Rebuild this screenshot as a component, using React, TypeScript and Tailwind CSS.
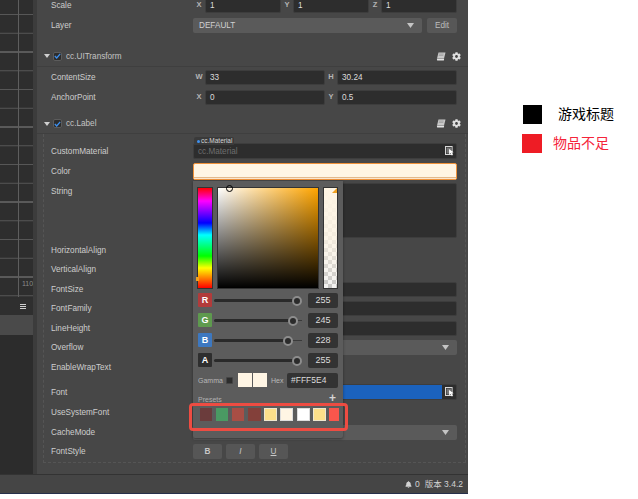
import React from "react";
import { FaCog, FaBell } from "react-icons/fa";

const BookIcon = () => (
  <svg width="10" height="9" viewBox="0 0 10 9" className="shrink-0">
    <path d="M2.5 0.5h7l-1.5 6h-7z" fill="#c9c9c9" />
    <path d="M0.8 6.8h7.4l-0.4 1.7h-6.6z" fill="#e4e4e4" />
    <path d="M3 2h4.6M2.7 3.4h4.6" stroke="#8a8a8a" strokeWidth="0.6" />
  </svg>
);

const PickIcon = () => (
  <svg width="9" height="10" viewBox="0 0 9 10" className="shrink-0">
    <rect x="0.5" y="0.5" width="6.6" height="8" fill="none" stroke="#d8d8d8" strokeWidth="1" />
    <rect x="1.5" y="1.5" width="4.6" height="6" fill="#777" />
    <path d="M4 3l4.6 3.2-2 .4 1.2 2.4-1 .5-1.2-2.4-1.4 1.3z" fill="#fff" />
  </svg>
);

const Caret = () => (
  <svg width="7" height="5" viewBox="0 0 7 5" className="shrink-0">
    <path d="M0 0h7L3.5 5z" fill="#c4c4c4" />
  </svg>
);

const Check = () => (
  <span className="flex h-[9px] w-[9px] items-center justify-center rounded-[2px] border border-[#5c5c5c] bg-[#2c2c2c]">
    <svg width="7" height="6" viewBox="0 0 7 6">
      <path d="M0.8 3l1.9 2L6.2 0.8" fill="none" stroke="#3e90ef" strokeWidth="1.3" />
    </svg>
  </span>
);

const Row = ({ label, h = 20, top = false, children }: { label: string; h?: number; top?: boolean; children?: React.ReactNode }) => (
  <div className="flex shrink-0 items-center" style={{ height: h }}>
    <span className={`w-[156px] shrink-0 pl-[14px] pt-[2px] text-[#cdcdcd] ${top ? "mb-[39px]" : ""}`}>{label}</span>
    <div className="flex w-[264px] items-center">{children}</div>
  </div>
);

const Input = ({ children, className = "" }: { children?: React.ReactNode; className?: string }) => (
  <div className={`flex h-[15px] min-w-0 flex-1 items-center rounded-[2px] border border-[#3d3d3d] bg-[#2d2d2d] px-[4px] ${className}`}>
    {children}
  </div>
);

const Axis = ({ a, v }: { a: string; v: string }) => (
  <div className="flex min-w-0 flex-1 items-center">
    <span className="w-[12px] shrink-0 text-center text-[7.5px] font-bold text-[#b4b4b4]">{a}</span>
    <Input><span className="pt-[2px] text-[#dcdcdc]">{v}</span></Input>
  </div>
);

const Select = ({ children }: { children?: React.ReactNode }) => (
  <div className="flex h-[15px] min-w-0 flex-1 items-center justify-between rounded-[2px] bg-[#5a5a5a] pl-[6px] pr-[8px] text-[#d0d0d0]">
    <span className="pt-[2px]">{children}</span>
    <Caret />
  </div>
);

const Header = ({ name, h }: { name: string; h: string }) => (
  <div className={`flex ${h} shrink-0 items-center border-b border-[#3f3f3f] pl-[7px] pr-[7px]`}>
    <span className="mr-[3px] flex w-[6px] justify-center">
      <svg width="6" height="4" viewBox="0 0 6 4"><path d="M0 0h6L3 4z" fill="#d0d0d0" /></svg>
    </span>
    <Check />
    <span className="ml-[4px] flex-1 pt-[2px] text-[#c4c4c4]">{name}</span>
    <span className="mr-[6px]"><BookIcon /></span>
    <FaCog className="text-[9px] text-[#e0e0e0]" />
  </div>
);

const Channel = ({ tag, bg, x, v }: { tag: string; bg: string; x: number; v: string }) => (
  <div className="flex h-[20px] items-center">
    <span className={`flex h-[14px] w-[14px] items-center justify-center rounded-[1px] text-[9px] font-bold text-white ${bg}`}>{tag}</span>
    <div className="relative mx-[2px] h-[3px] w-[88px]">
      <div className="absolute inset-x-0 top-[1px] h-[1px] bg-[#3a3a3a]" />
      <div className="absolute top-0 h-[3px] rounded-full bg-[#2a2a2a]" style={{ left: 0, width: x }} />
      <div
        className="absolute top-[-3px] h-[10px] w-[10px] rounded-full border-2 border-[#8d8d8d] bg-[#2b2b2b]"
        style={{ left: x - 5 }}
      />
    </div>
    <span className="ml-auto flex h-[15px] w-[30px] items-center justify-center rounded-[2px] bg-[#333] text-[9px] text-[#dcdcdc]">{v}</span>
  </div>
);

const presets = [
  { c: "bg-[#6b3c3c]", w: "w-[12px]" },
  { c: "bg-[#4a9a63]", w: "w-[12px]" },
  { c: "bg-[#a84e45]", w: "w-[12px]" },
  { c: "bg-[#83403a]", w: "w-[13px]" },
  { c: "bg-[#fde08a] border border-[#efe7cf]", w: "w-[13px]" },
  { c: "bg-[#fff5e4] border border-[#ddd]", w: "w-[13px]" },
  { c: "bg-white border border-[#ddd]", w: "w-[13px]" },
  { c: "bg-[#fde08a] border border-[#efe7cf]", w: "w-[13px]" },
  { c: "bg-[#f9564c]", w: "w-[10px]" },
];

const Picker = () => (
  <div className="absolute left-[193px] top-[181px] z-10 flex h-[257px] w-[150px] flex-col rounded-b-[2px] bg-[#5c5c5c] px-[4px] pt-[6px] shadow-[0_1px_3px_rgba(0,0,0,0.4)]">
    <div className="flex h-[102px] gap-[4px]">
      <div className="relative w-[16px] border border-[#333] bg-[linear-gradient(to_bottom,#f00,#f0f_13%,#00f_35%,#0ff_47%,#0f0_68%,#ff0_80%,#f00)]">
        <span className="absolute left-[-2px] top-[89px] h-[4px] w-[3px] bg-[#f0a020]" />
      </div>
      <div className="relative w-[102px] border border-[#333] bg-[linear-gradient(to_bottom,transparent,#000),linear-gradient(to_right,#fff,#ffa500)]">
        <span className="absolute left-[8px] top-[-3px] h-[7px] w-[7px] rounded-full border border-black" />
      </div>
      <div className="relative w-[15px] overflow-hidden border border-[#333] bg-[conic-gradient(#c4c4c4_25%,#f2f2f2_0_50%,#c4c4c4_0_75%,#f2f2f2_0)] bg-[length:8px_8px]">
        <div className="h-full w-full bg-gradient-to-b from-[#fff5e4] via-[#fff5e4cc] to-[#fff5e410]" />
        <span className="absolute right-0 top-0 h-0 w-0 border-b-[5px] border-l-[5px] border-b-[#f0a020] border-l-transparent" />
      </div>
    </div>
    <div className="mt-[1px] flex flex-col pl-[1px] pr-[1px]">
      <Channel tag="R" bg="bg-[#b23b3b]" x={83} v="255" />
      <Channel tag="G" bg="bg-[#5e9a4e]" x={79} v="245" />
      <Channel tag="B" bg="bg-[#3d78c0]" x={74} v="228" />
      <Channel tag="A" bg="bg-[#2e2e2e]" x={83} v="255" />
      <div className="flex h-[20px] items-center text-[7px] text-[#b8b8b8]">
        <span className="w-[28px] shrink-0">Gamma</span>
        <span className="h-[7px] w-[7px] shrink-0 rounded-[1px] border border-[#444] bg-[#2c2c2c]" />
        <span className="ml-[5px] h-[14px] w-[14px] shrink-0 bg-[#fff5e4]" />
        <span className="ml-[1px] h-[14px] w-[14px] shrink-0 bg-[#fff5e4]" />
        <span className="ml-[4px] w-[16px] shrink-0">Hex</span>
        <span className="flex h-[15px] flex-1 items-center rounded-[2px] bg-[#333] pl-[4px] text-[8.5px] text-[#dcdcdc]">#FFF5E4</span>
      </div>
    </div>
    <div className="mt-[2px] flex h-[12px] items-center justify-between pl-[1px] pr-[3px] text-[7px] text-[#b0b0b0]">
      <span className="pt-[2px]">Presets</span>
      <span className="text-[12px] font-bold leading-none text-[#d4d4d4]">+</span>
    </div>
    <div className="mt-[4px] flex h-[13px] items-stretch pl-[3px]">
      {presets.map((p, i) => (
        <div key={i} className="flex w-[16.1px] shrink-0">
          <span className={`${p.c} ${p.w} shrink-0`} />
        </div>
      ))}
    </div>
  </div>
);

const Inspector = () => (
  <div className="flex h-full min-w-0 flex-1 flex-col overflow-hidden bg-[#474747]">
    <div className="mt-[-5px] flex flex-col">
      <Row label="Scale">
        <Axis a="X" v="1" />
        <Axis a="Y" v="1" />
        <Axis a="Z" v="1" />
      </Row>
      <Row label="Layer">
        <div className="flex flex-1 items-center gap-[5px]">
          <Select>DEFAULT</Select>
          <span className="flex h-[15px] w-[30px] items-center justify-center rounded-[2px] bg-[#575757] pt-[2px] text-[#bdbdbd]">Edit</span>
        </div>
      </Row>
    </div>
    <div className="mt-[11px]">
      <Header name="cc.UITransform" h="h-[21px]" />
    </div>
    <Row label="ContentSize">
      <Axis a="W" v="33" />
      <Axis a="H" v="30.24" />
    </Row>
    <Row label="AnchorPoint">
      <Axis a="X" v="0" />
      <Axis a="Y" v="0.5" />
    </Row>
    <div className="mt-[7px]">
      <Header name="cc.Label" h="h-[20px]" />
    </div>
    <div className="ml-[6px] mr-[2px] flex flex-col border-b border-l border-r border-dashed border-[#555] pb-[1px] pt-[7px] [&>div>span:first-child]:w-[149px] [&>div>span:first-child]:pl-[7px]">
      <Row label="CustomMaterial">
        <div className="relative flex-1">
          <span className="absolute left-[1px] top-[-6px] z-[1] h-[8px] w-[40px] rounded-t-[2px] bg-[#3a3a3a] pl-[3px] text-[6.5px] leading-[7px] text-[#d4d4d4]">
            <span className="mr-[1px] inline-block h-[3px] w-[3px] rounded-full bg-[#3e90ef] align-middle" />cc.Material
          </span>
          <Input className="h-[16px] justify-between pr-[2px]">
            <span className="pt-[2px] text-[#6d6d6d]">cc.Material</span>
            <PickIcon />
          </Input>
        </div>
      </Row>
      <Row label="Color">
        <div className="flex h-[17px] flex-1 flex-col justify-end overflow-hidden rounded-[2px] border border-[#f0923a] bg-[#fff5e4]">
          <div className="h-[2px] border-t border-[#e2b98d] bg-[#f9e6cf]" />
        </div>
      </Row>
      <Row label="String" h={59} top>
        <div className="h-[55px] flex-1 rounded-[2px] border border-[#3d3d3d] bg-[#2f2f2f]" />
      </Row>
      <Row label="HorizontalAlign" />
      <Row label="VerticalAlign" h={19} />
      <Row label="FontSize"><Input /></Row>
      <Row label="FontFamily" h={19}><Input /></Row>
      <Row label="LineHeight"><Input /></Row>
      <Row label="Overflow" h={19}><Select /></Row>
      <Row label="EnableWrapText" />
      <div className="h-[5px] shrink-0" />
      <Row label="Font">
        <div className="flex h-[16px] flex-1 items-center rounded-[2px] border border-[#3d3d3d] bg-[#2d2d2d] pr-[2px]">
          <div className="h-full flex-1 bg-[#1b62bd]" />
          <span className="ml-[3px]"><PickIcon /></span>
        </div>
      </Row>
      <Row label="UseSystemFont" />
      <Row label="CacheMode"><Select /></Row>
      <Row label="FontStyle" h={19}>
        <div className="flex gap-[4px] text-[#c8c8c8]">
          <span className="flex h-[15px] w-[29px] items-center justify-center rounded-[2px] bg-[#565656] pt-[1px] font-bold">B</span>
          <span className="flex h-[15px] w-[29px] items-center justify-center rounded-[2px] bg-[#565656] pt-[1px] italic">I</span>
          <span className="flex h-[15px] w-[29px] items-center justify-center rounded-[2px] bg-[#565656] pt-[1px] underline">U</span>
        </div>
      </Row>
    </div>
  </div>
);

const Canvas = () => (
  <div className="relative h-[297px] shrink-0 bg-[#2e2e2e]">
    <svg width="33" height="297" className="block">
      {Array.from({ length: 16 }, (_, i) => (
        <line key={i} x1="0" x2="33" y1={14.5 + i * 18.75} y2={14.5 + i * 18.75} stroke={i % 4 === 2 ? "#858585" : "#575757"} />
      ))}
      <line x1="18.5" x2="18.5" y1="0" y2="297" stroke="#5e5e5e" />
    </svg>
    <span className="absolute left-[22px] top-[279px] w-[11px] overflow-hidden text-[7px] leading-[9px] text-[#8a8a8a]">1100</span>
  </div>
);

const LeftPane = () => (
  <div className="flex h-full w-[33px] shrink-0 flex-col bg-[#2e2e2e]">
    <Canvas />
    <div className="mt-[2px] flex h-[16px] shrink-0 items-center justify-end bg-[#2f2f2f] pr-[7px]">
      <svg width="6" height="6" viewBox="0 0 6 6"><path d="M0 .5h6M0 2.5h6M0 4.5h6" stroke="#cfcfcf" strokeWidth="1" /></svg>
    </div>
    <div className="h-[20px] shrink-0 bg-[#4a4a4a]" />
    <div className="flex-1 bg-[#2c2c2c]" />
  </div>
);

export default function App() {
  return (
    <div className="relative flex h-[499px] w-[638px] overflow-hidden bg-white font-['Liberation_Sans','Noto_Sans_CJK_SC',sans-serif] text-[8.2px] leading-none">
      <div className="relative h-[494px] w-[468px] shrink-0 border-b border-[#26304a] bg-[#3c3c3c]">
        <div className="flex h-[475px] gap-[4px] border-b border-[#333]">
          <LeftPane />
          <Inspector />
        </div>
        <div className="flex h-[18px] items-center justify-end bg-[#454545] pr-[5px] text-[8.5px] text-[#d2d2d2]">
          <FaBell className="mr-[3px] text-[7px]" />
          <span>0</span>
          <span className="ml-[5px]">版本 3.4.2</span>
        </div>
        <Picker />
        <div className="absolute left-[189px] top-[403px] z-20 h-[28px] w-[159px] rounded-[4px] border-[3px] border-[#ee4c42]" />
      </div>
      <div className="flex flex-1 flex-col gap-[10px] pt-[105px] text-[14px] leading-[19px]">
        <div className="flex items-center">
          <span className="ml-[55px] h-[19px] w-[19px] bg-black" />
          <span className="ml-[16px] text-black">游戏标题</span>
        </div>
        <div className="flex items-center">
          <span className="ml-[54px] h-[19px] w-[20px] bg-[#ee1c25]" />
          <span className="ml-[11px] text-[#f5243a]">物品不足</span>
        </div>
      </div>
    </div>
  );
}
